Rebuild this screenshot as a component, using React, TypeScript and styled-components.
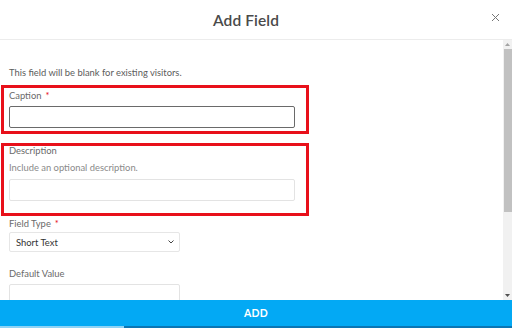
import styled, { createGlobalStyle } from 'styled-components';

const GlobalStyle = createGlobalStyle`
  html, body {
    margin: 0;
    padding: 0;
    background: #fff;
  }
  body {
    font-family: Lato, "Open Sans", Arial, sans-serif;
  }
  * {
    box-sizing: border-box;
  }
`;

const Modal = styled.div`
  width: 512px;
  height: 328px;
  display: flex;
  flex-direction: column;
  background: #fff;
  overflow: hidden;
`;

const Header = styled.div`
  position: relative;
  height: 40px;
  flex: none;
  display: flex;
  align-items: center;
  justify-content: center;
  padding-right: 20px;
  border-bottom: 1px solid #ececec;
`;

const Title = styled.h1`
  margin: 0;
  font-size: 15.5px;
  font-weight: 600;
  color: #4a4a4a;
  letter-spacing: 0.1px;
`;

const CloseButton = styled.button`
  position: absolute;
  right: 11px;
  top: 11px;
  width: 12px;
  height: 12px;
  padding: 0;
  border: none;
  background: none;
  display: flex;
  align-items: center;
  justify-content: center;
  cursor: pointer;
`;

const Body = styled.div`
  flex: 1;
  min-height: 0;
  display: flex;
`;

const ScrollArea = styled.div`
  flex: 1;
  overflow: hidden;
`;

const ScrollBar = styled.div`
  width: 9px;
  flex: none;
  background: #f1f1f1;
  display: flex;
  flex-direction: column;
  align-items: center;
`;

const ScrollArrow = styled.div`
  height: 9px;
  flex: none;
  display: flex;
  align-items: center;
  justify-content: center;
`;

const ScrollThumb = styled.div`
  width: 8px;
  height: 163px;
  background: #c1c1c1;
`;

const ScrollRest = styled.div`
  flex: 1;
`;

const Content = styled.div`
  display: flex;
  flex-direction: column;
  align-items: flex-start;
  padding: 27px 0 120px 9px;
`;

const Intro = styled.p`
  margin: 0 0 7px;
  font-size: 9.4px;
  line-height: 11px;
  color: #5c5c5c;
`;

const Highlight = styled.div<{ $pb: number; $mt?: number }>`
  width: 308px;
  margin-left: -8px;
  margin-top: ${p => p.$mt ?? 0}px;
  border: 3px solid #e8101a;
  padding: 0 0 ${p => p.$pb}px 5px;
  display: flex;
  flex-direction: column;
  align-items: flex-start;
`;

const Label = styled.label<{ $mt?: number }>`
  display: block;
  margin-top: ${p => p.$mt ?? 0}px;
  font-size: 9.4px;
  line-height: 12px;
  color: #6a6a6a;
`;

const Required = styled.span`
  color: #e8101a;
  margin-left: 4px;
`;

const Hint = styled.div`
  margin-top: 5px;
  font-size: 9.4px;
  line-height: 12px;
  color: #8a8a8a;
`;

const TextInput = styled.input<{ $w: number; $focus?: boolean; $mt: number }>`
  display: block;
  width: ${p => p.$w}px;
  height: 22px;
  margin-top: ${p => p.$mt}px;
  border: 1px solid ${p => (p.$focus ? '#6a6a6a' : '#e3e3e3')};
  border-radius: 2px;
  background: #fff;
  outline: none;
  font: inherit;
`;

const Select = styled.div`
  width: 171px;
  height: 20px;
  margin-top: 2px;
  border: 1px solid #e6e6e6;
  border-radius: 2px;
  display: flex;
  align-items: center;
  justify-content: space-between;
  padding: 0 5px 0 6px;
  font-size: 9.4px;
  color: #333;
`;

const Footer = styled.button`
  flex: none;
  height: 26px;
  border: none;
  background: #03a9f4;
  color: #fff;
  font-family: inherit;
  font-size: 10.5px;
  font-weight: 700;
  letter-spacing: 0.3px;
  cursor: pointer;
`;

const Strip = styled.div`
  flex: none;
  height: 2px;
  display: flex;
`;

const StripPart = styled.div<{ $c: string; $w?: number }>`
  background: ${p => p.$c};
  width: ${p => (p.$w ? `${p.$w}px` : 'auto')};
  flex: ${p => (p.$w ? 'none' : '1')};
`;

export default function App() {
  return (
    <>
      <GlobalStyle />
      <Modal>
        <Header>
          <Title>Add Field</Title>
          <CloseButton aria-label="Close">
            <svg width="9" height="9" viewBox="0 0 9 9">
              <path d="M1 1L8 8M8 1L1 8" stroke="#777" strokeWidth="1" fill="none" />
            </svg>
          </CloseButton>
        </Header>
        <Body>
          <ScrollArea>
            <Content>
              <Intro>This field will be blank for existing visitors.</Intro>
              <Highlight $pb={3}>
                <Label $mt={2}>
                  Caption<Required>*</Required>
                </Label>
                <TextInput $w={286} $focus $mt={4} />
              </Highlight>
              <Highlight $pb={12} $mt={9}>
                <Label $mt={-1}>Description</Label>
                <Hint>Include an optional description.</Hint>
                <TextInput $w={286} $mt={5} />
              </Highlight>
              <Label $mt={2}>
                Field Type<Required>*</Required>
              </Label>
              <Select>
                <span>Short Text</span>
                <svg width="6" height="4" viewBox="0 0 6 4">
                  <path d="M0.5 0.5L3 3L5.5 0.5" stroke="#444" strokeWidth="1" fill="none" />
                </svg>
              </Select>
              <Label $mt={16}>Default Value</Label>
              <TextInput $w={171} $mt={4} />
            </Content>
          </ScrollArea>
          <ScrollBar>
            <ScrollArrow>
              <svg width="5" height="3" viewBox="0 0 5 3">
                <path d="M0 3L2.5 0L5 3Z" fill="#a3a3a3" />
              </svg>
            </ScrollArrow>
            <ScrollThumb />
            <ScrollRest />
            <ScrollArrow>
              <svg width="5" height="3" viewBox="0 0 5 3">
                <path d="M0 0L2.5 3L5 0Z" fill="#505050" />
              </svg>
            </ScrollArrow>
          </ScrollBar>
        </Body>
        <Footer>ADD</Footer>
        <Strip>
          <StripPart $c="#8fd3f5" $w={124} />
          <StripPart $c="#0b76b4" />
        </Strip>
      </Modal>
    </>
  );
}
